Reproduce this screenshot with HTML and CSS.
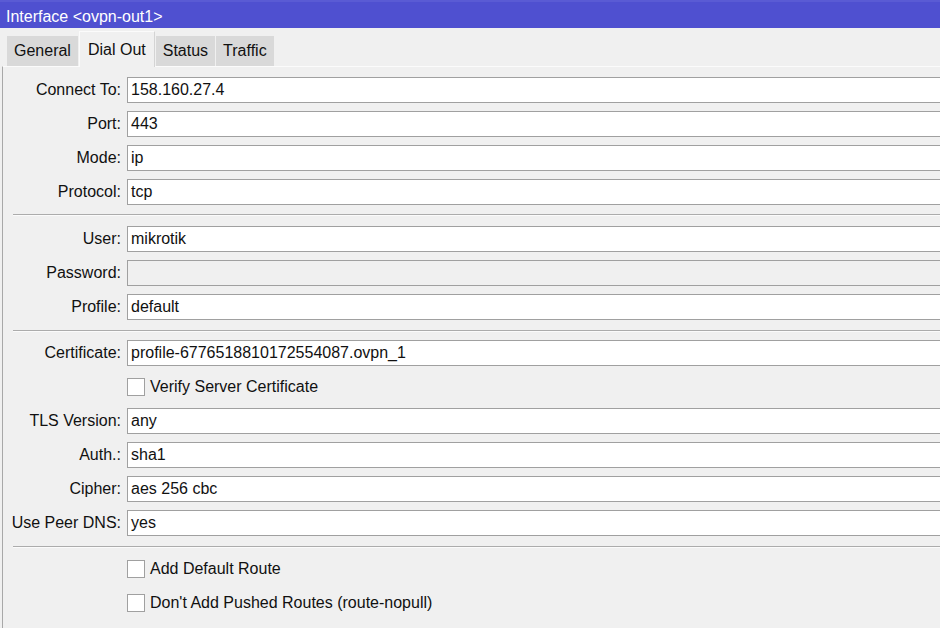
FILE: index.html
```html
<!DOCTYPE html>
<html>
<head>
<meta charset="utf-8">
<link rel="stylesheet" href="styles.css">
</head>
<body>
<div class="window">
  <div class="titlebar">Interface &lt;ovpn-out1&gt;</div>
  <div class="tabs">
    <div class="tab">General</div>
    <div class="tab active">Dial Out</div>
    <div class="tab">Status</div>
    <div class="tab">Traffic</div>
  </div>
  <div class="panel">
    <div class="row"><div class="label">Connect To:</div><div class="field">158.160.27.4</div></div>
    <div class="row"><div class="label">Port:</div><div class="field">443</div></div>
    <div class="row"><div class="label">Mode:</div><div class="field">ip</div></div>
    <div class="row"><div class="label">Protocol:</div><div class="field">tcp</div></div>
    <div class="sep"></div>
    <div class="row"><div class="label">User:</div><div class="field">mikrotik</div></div>
    <div class="row"><div class="label">Password:</div><div class="field disabled"></div></div>
    <div class="row"><div class="label">Profile:</div><div class="field">default</div></div>
    <div class="sep sep-mid"></div>
    <div class="row"><div class="label">Certificate:</div><div class="field">profile-6776518810172554087.ovpn_1</div></div>
    <div class="row"><div class="label"></div><div class="check"><span class="box"></span>Verify Server Certificate</div></div>
    <div class="row"><div class="label">TLS Version:</div><div class="field">any</div></div>
    <div class="row"><div class="label">Auth.:</div><div class="field">sha1</div></div>
    <div class="row"><div class="label">Cipher:</div><div class="field">aes 256 cbc</div></div>
    <div class="row"><div class="label">Use Peer DNS:</div><div class="field">yes</div></div>
    <div class="sep sep-last"></div>
    <div class="row"><div class="label"></div><div class="check"><span class="box"></span>Add Default Route</div></div>
    <div class="row"><div class="label"></div><div class="check"><span class="box"></span>Don't Add Pushed Routes (route-nopull)</div></div>
  </div>
</div>
</body>
</html>
```

FILE: styles.css
```css
html, body {
  margin: 0;
  padding: 0;
  background: #f0f0f0;
  overflow: hidden;
}
body {
  font-family: "Liberation Sans", Arial, sans-serif;
  font-size: 16px;
  color: #111;
}
.window {
  width: 940px;
  height: 628px;
  display: flex;
  flex-direction: column;
}
.titlebar {
  height: 28px;
  line-height: 29px;
  background: #4f50d0;
  border-top: 2px solid #5a5bd4;
  box-sizing: border-box;
  color: #fff;
  padding-left: 6px;
}
.tabs {
  height: 38px;
  display: flex;
  align-items: flex-end;
  gap: 1px;
  padding-left: 7px;
}
.tab {
  height: 30px;
  line-height: 30px;
  padding: 0 7px;
  background: #d9d9d9;
}
.tab.active {
  height: 36px;
  line-height: 35px;
  padding: 0 8px;
  background: #f0f0f0;
  border-left: 1px solid #fbfbfb;
  border-top: 1px solid #fbfbfb;
  border-right: 1px solid #d4d4d4;
  box-sizing: border-box;
  margin-bottom: -1px;
  position: relative;
  z-index: 1;
}
.panel {
  flex: 1;
  margin-left: 2px;
  border-left: 1px solid #a8a8a8;
  border-top: 1px solid #fbfbfb;
  padding-top: 10px;
  display: flex;
  flex-direction: column;
}
.row {
  display: flex;
  align-items: center;
  height: 26px;
  margin-bottom: 8px;
}
.label {
  width: 118px;
  flex: none;
  text-align: right;
  margin-right: 6px;
  white-space: nowrap;
}
.field {
  flex: 1;
  height: 26px;
  box-sizing: border-box;
  background: #fff;
  border-top: 1px solid #a0a0a0;
  border-bottom: 1px solid #a0a0a0;
  border-left: 1px solid #a0a0a0;
  padding-left: 3px;
  line-height: 24px;
  white-space: nowrap;
}
.field.disabled {
  background: #f0f0f0;
}
.check {
  display: flex;
  align-items: center;
  gap: 5px;
}
.box {
  width: 18px;
  height: 18px;
  box-sizing: border-box;
  border: 1px solid #a0a0a0;
  background: #fff;
}
.sep {
  margin: 1px 0 10px 10px;
  border-top: 1px solid #acacac;
  border-bottom: 1px solid #fbfbfb;
}
.sep-mid {
  margin-top: 2px;
  margin-bottom: 8px;
}
.sep-last {
  margin-top: 2px;
  margin-bottom: 8px;
}
```
